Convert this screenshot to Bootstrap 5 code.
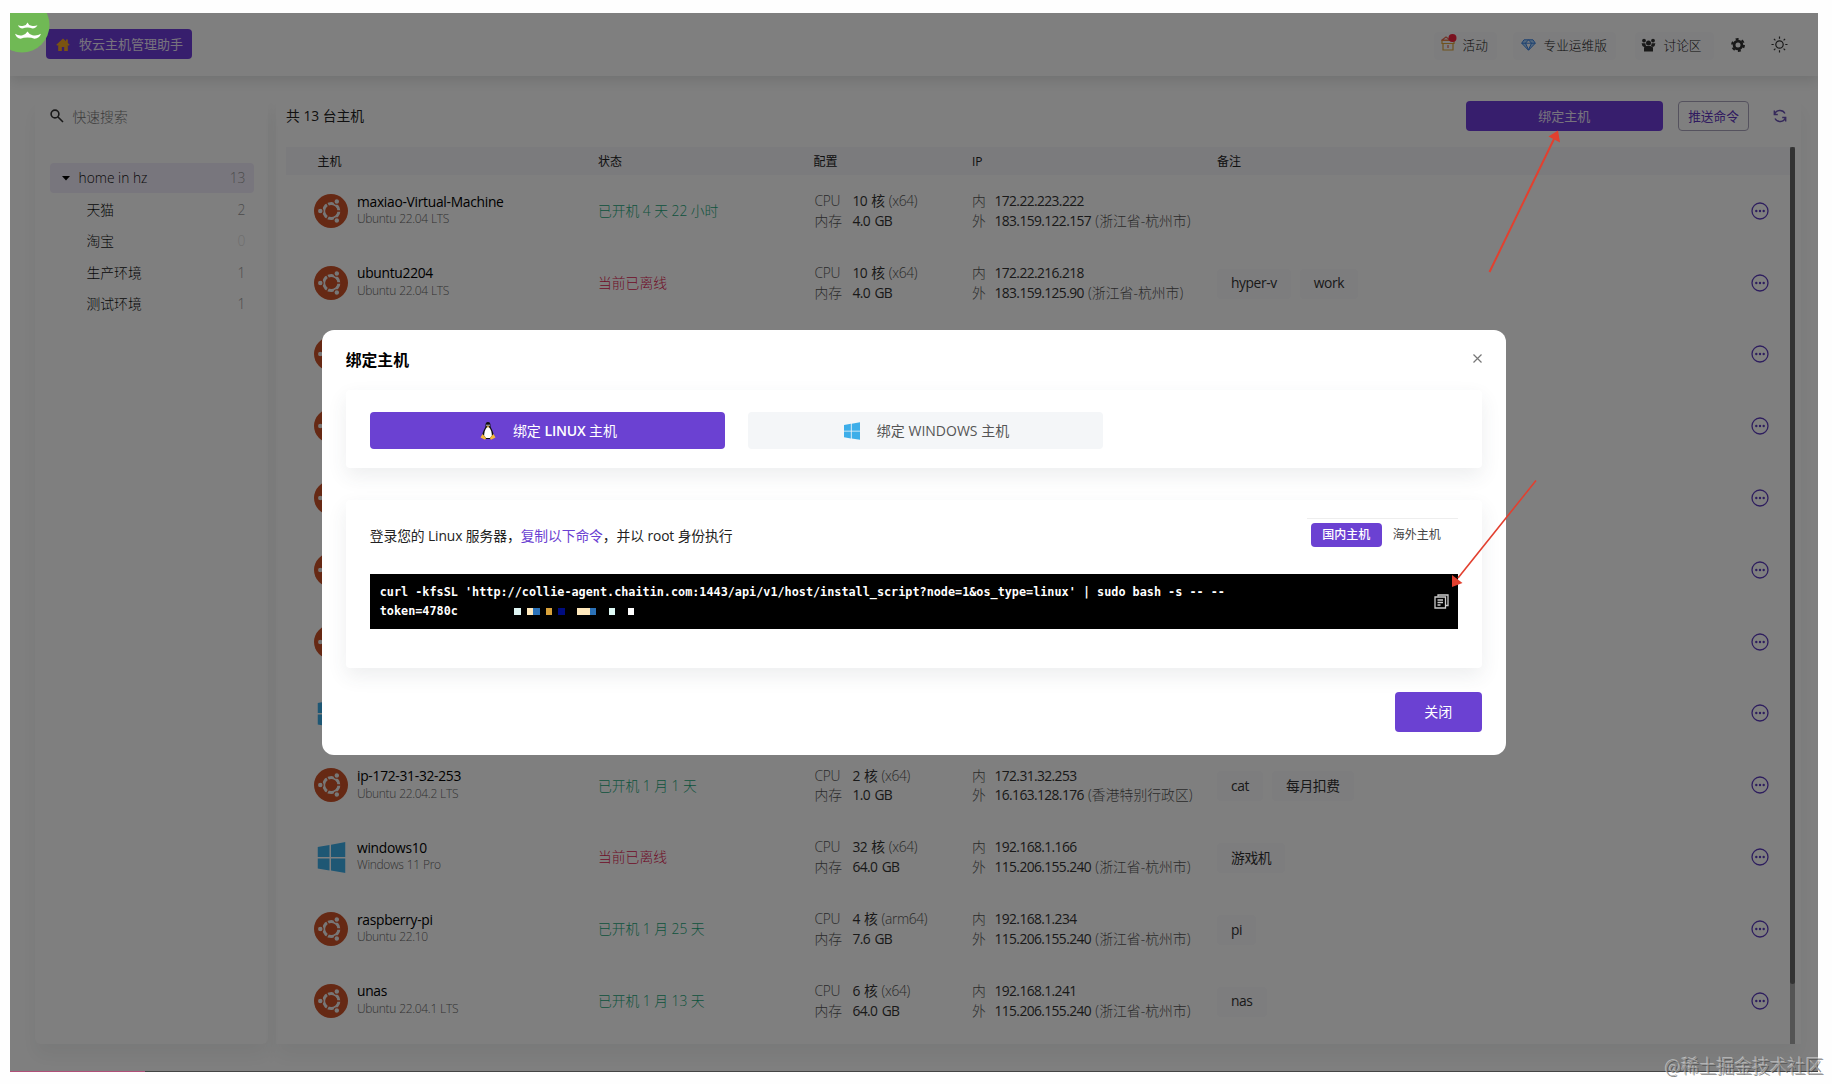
<!DOCTYPE html>
<html lang="zh-CN">
<head>
<meta charset="utf-8">
<title>牧云主机管理助手</title>
<link href="https://cdn.jsdelivr.net/npm/bootstrap@5.3.0/dist/css/bootstrap.min.css" rel="stylesheet">
<style>
body{margin:0;background:#fefefe;width:1832px;height:1084px;overflow:hidden;position:relative;font-family:"Open Sans","Noto Sans CJK SC",sans-serif;font-size:13.8px;line-height:1.2;color:#222;padding:13px 0 0 10px}
.app-screen{width:1807.5px;height:1059px;position:relative;overflow:hidden;background:#fff}
.topbar{height:63px;padding:0 23px 2px 36px;box-shadow:0 5px 12px rgba(40,44,50,.13)}
.brand{height:30.5px;width:146px;background:#6f3cda;color:#eee6fb;border-radius:4px;font-size:13px;padding:1px 0 0 10px;gap:9px;margin-top:1px}
.topnav{font-size:12.7px;color:#222;height:28px;background:#fbfbfd;border-radius:4px;white-space:nowrap;font-weight:300}
.side{width:233px;height:946px;margin-left:25px;padding:0 14.5px;box-shadow:0 12px 18px rgba(40,44,50,.06);border-radius:6px}
.tree{height:31.5px;padding:1px 8px 0 37px;color:#111;font-weight:300}
.tree.on{background:#f1ecfa;border-radius:4px;padding:2px 8px 0 12px;height:30.5px;margin-bottom:1px}
.cnt{color:#999;font-weight:300}
.main{width:1525px;height:946px;margin-left:8px;padding-left:10px;box-shadow:0 12px 18px rgba(40,44,50,.06)}
.tools{height:49px;padding-top:2.5px}
.bind{width:197.5px;height:30.5px;background:#6f3cda;color:#eee6fb;border-radius:4px;font-size:13px;padding-top:2px}
.push{width:71px;height:30.5px;border:1px solid #aaa5bd;color:#5f35c0;border-radius:4px;font-size:12.7px;padding-top:1px}
.thead-bar{height:28px;background:#f6f6fa;font-size:12px;color:#222;padding-top:3px}
.host-row{height:71.8px}
.c0{width:312px;padding-left:28px}.thead-bar .c0{padding-left:31.5px}
.c1{width:215.5px;padding-top:1px}.c2{width:158.5px}.c3{width:245px}.c4{width:527px;padding-top:2px}
.thead-bar .c1,.thead-bar .c4{padding-top:0}
.nm{letter-spacing:-.28px;color:#000;line-height:17px}
.os{font-size:12px;color:#666;letter-spacing:-.33px;line-height:17px;font-weight:300;padding-top:.5px;word-spacing:.4px}
.ok{color:#1aa77a;font-weight:300;letter-spacing:-.1px;word-spacing:.2px}.bad{color:#e0204f;font-weight:300}
.ln{font-size:13.8px;line-height:19.6px;white-space:nowrap;letter-spacing:-.6px;word-spacing:1.3px;color:#333}
.ln i{font-style:normal;display:inline-block;color:#555;font-weight:300;letter-spacing:0}
.ln u{text-decoration:none;color:#555;font-weight:300;letter-spacing:-.35px}
.ln u.loc{letter-spacing:.05px}
.c2 i{width:38px}.c3 i{width:22.5px}
.c2 i.lat{letter-spacing:-.3px}
.tg{background:#fafafd;border-radius:4px;padding:0 14px;height:30px;font-size:13.8px;color:#333;margin-right:9px;letter-spacing:-.4px}
.track{width:5px;background:#a8a8a8;height:897px}
.track div{height:837px;background:#666;border-radius:3px}
.veil{position:absolute;inset:0;background:rgba(0,0,0,.5)}
.dlg{width:1184px;height:424.5px;background:#fff;border-radius:12px;padding:0 24px}
.dlg-head{height:60px;padding:6px 0 5px}
.dlg-head b{font-size:15.8px;color:#000}
.pane{border-radius:4px;box-shadow:0 8px 20px rgba(50,65,75,.09);padding:0 24px;background:#fff}
.p1{height:78px;padding-top:22px;gap:22.5px}
.tabbtn{width:355.5px;height:36.5px;border-radius:4px;background:#f4f6f8;color:#555;gap:17px;font-size:14px;padding:1px 0 0 2px}
.tabbtn.on{background:#6b41d2;color:#fff}
.p2{height:168px;margin-top:32px;padding-top:18px}
.seg{width:151px;height:36px;border-top:1px solid #eee;font-size:12px;color:#444;padding:4px}
.seg .on{background:#6b41d2;color:#fff;font-weight:500;width:71px;height:24px;border-radius:4px}
.cmd{height:55.5px;background:#000;color:#fff;font:bold 11.8px/18.5px "DejaVu Sans Mono","Liberation Mono",monospace;padding:0 9px 0 10px;white-space:pre;margin-top:19.5px}
.px{display:inline-block;width:6.3px;height:6.4px}
.closebtn{width:87px;height:40px;background:#6b41d2;color:#fff;border-radius:4px;font-size:14px;margin-top:23.5px;padding-top:1px}
.corner{position:absolute;left:0;top:0}
.over{position:absolute;left:0;top:0;pointer-events:none}
.wm{position:absolute;left:1665px;top:1053px;font:300 17.8px/24px "Noto Sans CJK SC",sans-serif;color:rgba(165,165,165,.8);text-shadow:1px 1px 0 rgba(70,70,70,.7),-1px -1px 0 rgba(255,255,255,.5);white-space:nowrap}
.base{position:absolute;left:0;bottom:0;height:1px;width:100%;background:#444}
.base div{width:135px;height:1px;background:#b05078}
</style>
<script src="https://cdn.jsdelivr.net/npm/bootstrap@5.3.0/dist/js/bootstrap.bundle.min.js"></script>
</head>
<body>
<svg width="0" height="0" class="position-absolute">
<symbol id="ubu" viewBox="0 0 34 34"><circle cx="17" cy="17" r="17" fill="#cd5229"/><circle cx="17.3" cy="17" r="7.6" fill="none" stroke="#eee" stroke-width="3"/><g stroke="#cd5229" stroke-width="1.3"><path d="M17.3 17H29M17.3 17l-6-10.4M17.3 17l-6 10.4"/></g><circle cx="17.3" cy="17" r="5.6" fill="#cd5229"/><g fill="#eee" stroke="#cd5229" stroke-width="1.1"><circle cx="6.3" cy="17" r="2.8"/><circle cx="22.8" cy="7.5" r="2.8"/><circle cx="22.8" cy="26.5" r="2.8"/></g></symbol>
<symbol id="win" viewBox="0 0 28 31"><path fill="#3daee9" d="M0 5l12-2v12H0zM13.5 2.700L28 0v15H13.500zM0 16.500h12v12L0 26.500zM13.500 16.500H28V31l-14.500-2.500z"/></symbol>
<symbol id="more" viewBox="0 0 18 18"><circle cx="9" cy="9" r="8" fill="none" stroke="#5c3cbd" stroke-width="1.3"/><g fill="#5c3cbd"><circle cx="5.3" cy="9" r="1.2"/><circle cx="9" cy="9" r="1.2"/><circle cx="12.7" cy="9" r="1.2"/></g></symbol>
</svg>
<div class="app-screen">
  <div class="topbar d-flex align-items-center">
    <div class="brand d-flex align-items-center">
      <svg width="14" height="14" viewBox="0 0 14 14"><path fill="#f5a623" d="M7 .6L.3 6.8l1 1 .9-.8V13h3.6V9h2.4v4h3.6V7l.9.8 1-1L11.8 5V1.6H10v1.7z"/></svg>
      <span>牧云主机管理助手</span></div>
    <div class="d-flex ms-auto align-items-center" style="margin-top:4px">
      <div class="topnav d-flex align-items-center" style="width:63px;margin-right:16px;padding-left:7px;gap:6px">
        <svg width="16" height="18" viewBox="0 0 16 18" style="margin-top:-5px"><g fill="none" stroke="#e0a53a" stroke-width="1.2"><path d="M1 6.5h12v3H1zM2 9.5h10V16H2z"/><path stroke="#e46a50" d="M1 6h8L5 3zM7 11v3"/></g><circle cx="11.5" cy="4" r="4" fill="#f5223f"/></svg>活动</div>
      <div class="topnav d-flex align-items-center" style="width:103px;margin-right:19px;padding-left:8px;gap:8px">
        <svg width="15" height="12" viewBox="0 0 15 12" style="margin-top:-2px"><path d="M3 .8h9l2.3 3.4L7.5 11.3.7 4.2zM.7 4.2h13.6M4.5 4.2l3 6.6 3-6.6L7.5.8z" fill="#a9d4ff" stroke="#3b82e0" stroke-width="1"/></svg>专业运维版</div>
      <div class="topnav d-flex align-items-center" style="width:79px;margin-right:17px;padding-left:6px;gap:8px">
        <svg width="15" height="14" viewBox="0 0 15 14" fill="#333" style="margin-top:-2px"><circle cx="3" cy="2.6" r="1.9"/><circle cx="12" cy="2.6" r="1.9"/><circle cx="7.5" cy="5" r="2.5"/><path d="M.6 5.2h3.8q0 2 1 3L3 9Q.8 8 .6 5.2M14.4 5.2h-3.8q0 2-1 3l2.4.8q2.200-1 2.400-3.800M3 13.500V10q0-2 2-2h5q2 0 2 2v3.500z"/></svg>讨论区</div>
      <svg width="14" height="14" viewBox="0 0 14 14" style="margin:-2px 26px 0 0"><g fill="none" stroke="#333"><circle cx="7" cy="7" r="3.900" stroke-width="2.800"/><circle cx="7" cy="7" r="6" stroke-width="1.900" stroke-dasharray="3 3.283"/></g></svg>
      <svg width="17" height="17" viewBox="0 0 17 17" fill="none" stroke="#333" stroke-width="1.2" style="margin:-2px 7px 0 0"><circle cx="8.500" cy="8.500" r="3.700"/><path d="M8.500 .5v2.200M8.500 14.300v2.200M.5 8.500h2.200M14.300 8.500h2.200M2.900 2.900l1.500 1.500M12.600 12.600l1.500 1.500M14.100 2.900l-1.500 1.500M4.400 12.600l-1.500 1.500"/></svg>
    </div>
  </div>
  <div class="d-flex" style="padding-top:22px">
    <div class="side flex-shrink-0">
      <div class="d-flex align-items-center" style="height:36px;gap:9px;margin-bottom:28.5px">
        <svg width="14" height="14" viewBox="0 0 14 14" fill="none" stroke="#333" stroke-width="1.600"><circle cx="5" cy="5" r="3.900"/><path d="M8 8l5 5"/></svg><span style="color:#777;font-weight:300;padding-top:2px">快速搜索</span></div>
      <div class="tree on d-flex align-items-center"><svg width="9" height="5" viewBox="0 0 9 5" class="me-2"><path d="M0 0h8L4 4.500z" fill="#000"/></svg><span>home in hz</span><span class="cnt ms-auto">13</span></div>
      <div class="tree d-flex align-items-center">天猫<span class="cnt ms-auto">2</span></div>
      <div class="tree d-flex align-items-center">淘宝<span class="cnt ms-auto" style="color:#ddd">0</span></div>
      <div class="tree d-flex align-items-center">生产环境<span class="cnt ms-auto">1</span></div>
      <div class="tree d-flex align-items-center">测试环境<span class="cnt ms-auto">1</span></div>
    </div>
    <div class="main flex-shrink-0">
      <div class="tools d-flex align-items-start"><span style="padding-top:7px">共 13 台主机</span>
        <div class="bind d-flex align-items-center justify-content-center ms-auto">绑定主机</div>
        <div class="push d-flex align-items-center justify-content-center" style="margin:0 24px 0 15px">推送命令</div>
        <svg width="14" height="14" viewBox="0 0 14 14" fill="none" stroke="#6a52b5" stroke-width="1.400" style="margin:8px 14px 0 0"><path d="M1.500 5.500A5.700 5.700 0 0 1 12 4.500M12.500 8.500A5.700 5.700 0 0 1 2 9.500M1.300 1.500v4h3.500M12.700 12.500v-4H9.200"/></svg>
      </div>
      <div class="d-flex">
        <div style="width:1504px" id="hosts">
          <div class="thead-bar d-flex align-items-center"><div class="c0">主机</div><div class="c1">状态</div><div class="c2">配置</div><div class="c3">IP</div><div class="c4">备注</div></div>
        </div>
        <div class="track"><div></div></div>
      </div>
    </div>
  </div>
  <div class="veil d-flex align-items-center justify-content-center">
    <div class="dlg">
      <div class="dlg-head d-flex align-items-center justify-content-between"><b>绑定主机</b>
        <svg width="9" height="9" viewBox="0 0 9 9" stroke="#777" stroke-width="1.200" style="margin:-4px 0 0 0"><path d="M.5.5l8 8M8.500.5l-8 8"/></svg></div>
      <div class="pane p1 d-flex">
        <div class="tabbtn on d-flex align-items-center justify-content-center">
          <svg width="16" height="18" viewBox="0 0 16 18"><path d="M8 0C5.800 0 5.400 1.800 5.500 4c.1 2-3.300 5.500-3 9.500L5 17h6l2.500-3.500c.3-4-3-7.500-3-9.500C10.600 1.800 10.200 0 8 0" fill="#111"/><path d="M8 5C6 5 4 10 4.200 13.500L6 16h4l1.800-2.500C12 10 10 5 8 5" fill="#fff"/><path d="M6.500 4.200h3L8 5.800zM2.500 12L.5 15.500 5 17.800 6.200 16zM13.500 12l2 3.500L11 17.800 9.800 16z" fill="#f6b93b"/><circle cx="7" cy="3.200" r=".7" fill="#fff"/><circle cx="9" cy="3.200" r=".7" fill="#fff"/></svg>
          <span>绑定 <strong class="fw-semibold" style="letter-spacing:-.2px">LINUX</strong> 主机</span></div>
        <div class="tabbtn d-flex align-items-center justify-content-center"><svg width="16" height="18"><use href="#win"/></svg><span>绑定 WINDOWS 主机</span></div>
      </div>
      <div class="pane p2">
        <div class="d-flex justify-content-between"><span style="padding-top:9.500px;letter-spacing:-.1px">登录您的 Linux 服务器，<span style="color:#6b41d2">复制以下命令</span>，并以 root 身份执行</span>
          <div class="seg d-flex"><div class="on d-flex align-items-center justify-content-center">国内主机</div><div class="d-flex align-items-center" style="padding-left:11px;height:24px">海外主机</div></div></div>
        <div class="cmd d-flex align-items-center justify-content-between"><div>curl -kfsSL 'http://collie-agent.chaitin.com:1443/api/v1/host/install_script?node=1&amp;os_type=linux' | sudo bash -s -- --
token=4780c<span class="px" style="margin-left:56.500px;background:#dff5f3"></span><span class="px" style="margin-left:6.300px;background:#ffe9bd"></span><span class="px" style="background:#2c72b8"></span><span class="px" style="margin-left:6.300px;background:#d9a23b"></span><span class="px" style="margin-left:6.300px;background:#000c80"></span><span class="px" style="margin-left:12.600px;background:#ffe9bd;width:12.600px"></span><span class="px" style="background:#2c72b8"></span><span class="px" style="margin-left:12.600px;background:#dffaf6"></span><span class="px" style="margin-left:12.600px;background:#fff"></span></div>
          <svg width="15" height="15" viewBox="0 0 15 15" fill="none" stroke="#ccc" stroke-width="1.300"><path d="M4 2.500V1h10v10.500h-2"/><path d="M1 3h10.500v11H1zM3.500 6h5.500M3.500 8.500h5.500M3.500 11h3"/></svg></div>
      </div>
      <div class="d-flex justify-content-end"><div class="closebtn d-flex align-items-center justify-content-center">关闭</div></div>
    </div>
  </div>
  <svg class="corner" width="60" height="60" viewBox="0 0 60 60"><circle cx="12" cy="12" r="27.500" fill="#70b955"/><path fill="#fff" d="M17.500 9.500q.8 2.500 4 3.300 3.500.6 6-.6-1.500 3-5 3.200-2.500-.8-5-.8t-5 .8Q9 15.200 8 12.200q2.500 1.200 5.500.6 3.200-.8 4-3.300M17.500 18.500q1.500 2.800 5 3.700 4.500 1 8.500-1.500-1.500 4.500-6.500 5-3-1.200-7-1.200t-7 1.200Q6.500 25.200 5 20.700q4 2.500 7.500 1.500t5-3.700"/></svg>
  <div class="base"><div></div></div>
</div>
<svg class="over" width="1832" height="1084"><g stroke="#e2402f" stroke-width="2" fill="#e2402f"><path d="M1489.500 272L1554 139"/><path stroke="none" d="M1558 130.500l2 12-11.500-6z"/><path d="M1536 480.500L1458 578" stroke-width="1.600"/><path stroke="none" d="M1452 587v-12l10.500 8z"/></g></svg>
<div class="wm">@稀土掘金技术社区</div>
<script>
const U={os:'ubu'},W={os:'win'};
const hosts=[
["maxiao-Virtual-Machine","Ubuntu 22.04 LTS","已开机 4 天 22 小时","10","x64","4.0","172.22.223.222","183.159.122.157","浙江省-杭州市",[]],
["ubuntu2204","Ubuntu 22.04 LTS","当前已离线","10","x64","4.0","172.22.216.218","183.159.125.90","浙江省-杭州市",["hyper-v","work"]],
U,U,U,U,U,W,
["ip-172-31-32-253","Ubuntu 22.04.2 LTS","已开机 1 月 1 天","2","x64","1.0","172.31.32.253","16.163.128.176","香港特别行政区",["cat","每月扣费"]],
["windows10","Windows 11 Pro","当前已离线","32","x64","64.0","192.168.1.166","115.206.155.240","浙江省-杭州市",["游戏机"]],
["raspberry-pi","Ubuntu 22.10","已开机 1 月 25 天","4","arm64","7.6","192.168.1.234","115.206.155.240","浙江省-杭州市",["pi"]],
["unas","Ubuntu 22.04.1 LTS","已开机 1 月 13 天","6","x64","64.0","192.168.1.241","115.206.155.240","浙江省-杭州市",["nas"]]];
const list=document.getElementById('hosts');
hosts.forEach(h=>{
  const full=Array.isArray(h);
  const w=full?h[1].startsWith('Win'):h.os==='win';
  const ic=w?'<svg width="34" height="31"><use href="#win" x="3.500" width="28" height="31"/></svg>':'<svg width="34" height="34"><use href="#ubu"/></svg>';
  list.insertAdjacentHTML('beforeend',`<div class="host-row d-flex align-items-center"><div class="c0 d-flex align-items-center">${ic}${full?`<div style="padding-left:9px;margin-top:-2px"><div class="nm">${h[0]}</div><div class="os">${h[1]}</div></div>`:''}</div>`+
  (full?`<div class="c1 ${h[2][0]=='当'?'bad':'ok'}">${h[2]}</div><div class="c2" style="padding-left:1px"><div class="ln"><i class="lat">CPU</i>${h[3]} 核 <u>(${h[4]})</u></div><div class="ln"><i>内存</i>${h[5]} GB</div></div><div class="c3"><div class="ln"><i>内</i>${h[6]}</div><div class="ln"><i>外</i>${h[7]} <u class="loc">(${h[8]})</u></div></div><div class="c4 d-flex">${h[9].map(t=>`<span class="tg d-flex align-items-center">${t}</span>`).join('')}</div>`:'<div style="width:1146px"></div>')+
  `<svg width="18" height="18" style="margin-left:7px"><use href="#more"/></svg></div>`);
});
</script>
</body>
</html>
